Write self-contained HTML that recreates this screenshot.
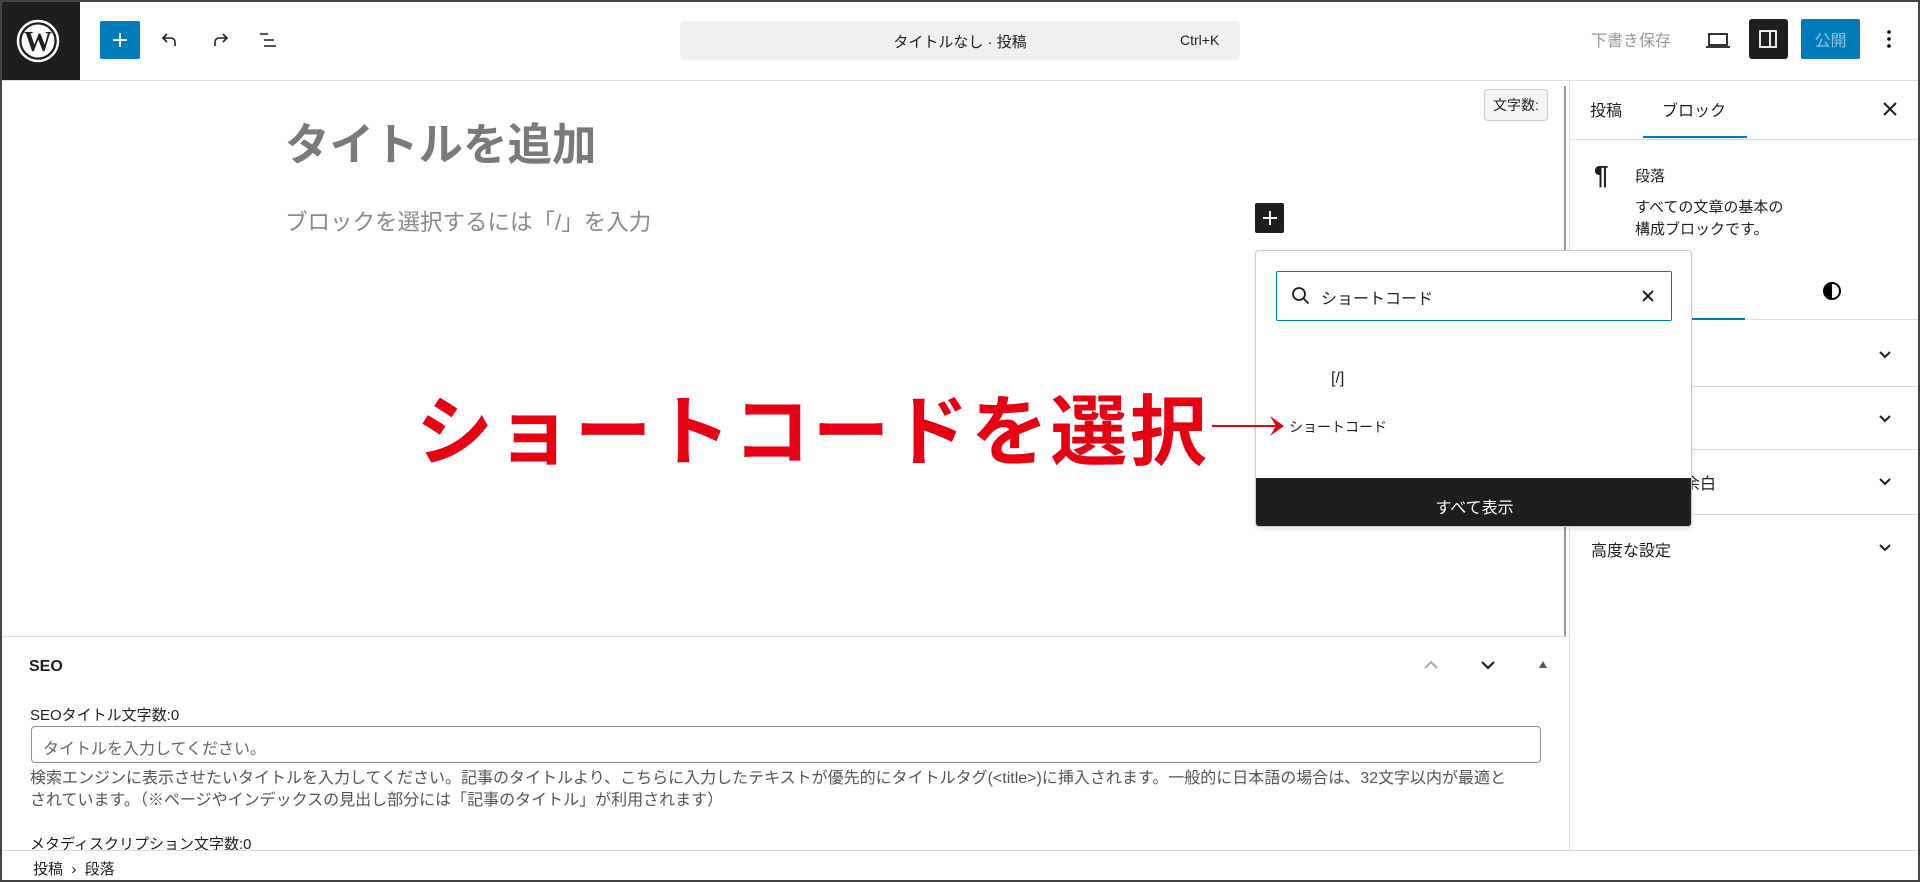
<!DOCTYPE html>
<html><head><meta charset="utf-8"><style>
*{box-sizing:border-box;margin:0;padding:0}
body{width:1920px;height:882px;overflow:hidden;background:#fff;font-family:"Liberation Sans","Noto Sans CJK JP",sans-serif;color:#1e1e1e;position:relative}
.frame{position:absolute;inset:0;border:2px solid #444;pointer-events:none;z-index:50}
.abs{position:absolute}
.t{position:absolute;white-space:nowrap}
</style></head><body>
<div class="frame"></div>
<!-- top bar -->
<div class="abs" style="left:0;top:0;width:1920px;height:81px;border-bottom:1px solid #ddd;background:#fff"></div>
<div class="abs" style="left:0;top:0;width:80px;height:80px;background:#1e1e1e"></div>
<svg class="abs" style="left:16px;top:19px" width="44" height="44" viewBox="0 0 44 44"><circle cx="22" cy="22" r="20" fill="none" stroke="#fff" stroke-width="2.5"/><circle cx="22" cy="22" r="16.5" fill="#fff"/><text x="22" y="32" text-anchor="middle" font-family="Liberation Serif" font-weight="bold" font-size="28" fill="#1e1e1e">W</text></svg>
<div class="abs" style="left:100px;top:21px;width:40px;height:38px;background:#007cba;border-radius:2px"></div>
<svg class="abs" style="left:108px;top:28px" width="24" height="24"><path d="M12 5v14M5 12h14" stroke="#fff" stroke-width="2"/></svg>
<svg class="abs" style="left:158px;top:28px" width="24" height="24" fill="none" stroke="#1e1e1e" stroke-width="1.6"><path d="M9 6L5 10l4 4"/><path d="M5 10h8a4 4 0 014 4v4"/></svg>
<svg class="abs" style="left:208px;top:28px" width="24" height="24" fill="none" stroke="#1e1e1e" stroke-width="1.6"><path d="M15 6l4 4-4 4"/><path d="M19 10h-8a4 4 0 00-4 4v4"/></svg>
<svg class="abs" style="left:257px;top:28px" width="24" height="24" fill="none" stroke="#1e1e1e" stroke-width="1.6"><path d="M3 6h8M7 12h10M7 18h12"/></svg>
<div class="abs" style="left:680px;top:21px;width:560px;height:39px;background:#f0f0f0;border-radius:4px"></div>
<div class="t" style="left:680px;width:560px;text-align:center;top:31px;font-size:15px">タイトルなし · 投稿</div>
<div class="t" style="left:1180px;top:32px;font-size:14px">Ctrl+K</div>
<div class="t" style="left:1591px;top:27px;font-size:16px;color:#999">下書き保存</div>
<svg class="abs" style="left:1705px;top:28px" width="26" height="24" fill="none" stroke="#1e1e1e" stroke-width="1.8"><rect x="4" y="6" width="18" height="11"/><path d="M1 19h24"/></svg>
<div class="abs" style="left:1749px;top:19px;width:39px;height:40px;background:#1e1e1e;border-radius:3px"></div>
<svg class="abs" style="left:1756px;top:27px" width="24" height="24" fill="none" stroke="#fff" stroke-width="1.8"><rect x="4" y="4" width="16" height="16"/><path d="M14 4v16"/></svg>
<div class="abs" style="left:1801px;top:19px;width:59px;height:40px;background:#007cba;border-radius:2px"></div>
<div class="t" style="left:1801px;width:59px;text-align:center;top:27px;font-size:16px;color:#8fc4e3">公開</div>
<svg class="abs" style="left:1879px;top:27px" width="20" height="24"><circle cx="10" cy="5" r="1.8"/><circle cx="10" cy="12" r="1.8"/><circle cx="10" cy="19" r="1.8"/></svg>

<!-- editor -->
<div class="t" style="left:285px;top:108px;font-size:44.5px;font-weight:bold;color:#7a7a7a">タイトルを追加</div>
<div class="t" style="left:285px;top:205px;font-size:22.5px;color:#8a8a8a">ブロックを選択するには「/」を入力</div>
<div class="abs" style="left:1484px;top:89px;width:64px;height:32px;background:#f5f5f5;border:1px solid #ccc;border-radius:4px"></div>
<div class="t" style="left:1493px;top:95px;font-size:14px">文字数:</div>
<div class="abs" style="left:1564px;top:86px;width:2px;height:551px;background:#999"></div>
<div class="abs" style="left:1569px;top:81px;width:1px;height:770px;background:#ddd"></div>
<div class="abs" style="left:1255px;top:203px;width:29px;height:30px;background:#1e1e1e;border-radius:2px"></div>
<svg class="abs" style="left:1258px;top:206px" width="24" height="24"><path d="M12 5v14M5 12h14" stroke="#fff" stroke-width="2"/></svg>

<!-- sidebar -->
<div class="t" style="left:1590px;top:97px;font-size:16px">投稿</div>
<div class="t" style="left:1662px;top:97px;font-size:16px">ブロック</div>
<div class="abs" style="left:1643px;top:136px;width:104px;height:2px;background:#007cba"></div>
<div class="abs" style="left:1570px;top:139px;width:350px;height:1px;background:#ddd"></div>
<svg class="abs" style="left:1880px;top:99px" width="20" height="20" stroke="#1e1e1e" stroke-width="2"><path d="M4 4l12 12M16 4L4 16"/></svg>
<div class="t" style="left:1594px;top:160px;font-size:26px;font-weight:bold">¶</div>
<div class="t" style="left:1635px;top:165px;font-size:15px">段落</div>
<div class="t" style="left:1635px;top:197px;font-size:15px;line-height:22px">すべての文章の基本の<br>構成ブロックです。</div>
<svg class="abs" style="left:1821px;top:280px" width="22" height="22"><circle cx="11" cy="11" r="8" fill="none" stroke="#000" stroke-width="2"/><path d="M11 3a8 8 0 000 16z"/></svg>
<div class="abs" style="left:1570px;top:319px;width:350px;height:1px;background:#ddd"></div>
<div class="abs" style="left:1570px;top:318px;width:175px;height:2px;background:#007cba"></div>
<div class="abs" style="left:1570px;top:386px;width:350px;height:1px;background:#ddd"></div>
<div class="abs" style="left:1570px;top:449px;width:350px;height:1px;background:#ddd"></div>
<div class="abs" style="left:1570px;top:514px;width:350px;height:1px;background:#ddd"></div>
<div class="t" style="left:1684px;top:470px;font-size:16px">余白</div>
<div class="t" style="left:1591px;top:537px;font-size:16px">高度な設定</div>
<svg class="abs" style="left:1875px;top:344px" width="20" height="20" fill="none" stroke="#1e1e1e" stroke-width="2"><path d="M5 8l5 5 5-5"/></svg>
<svg class="abs" style="left:1875px;top:408px" width="20" height="20" fill="none" stroke="#1e1e1e" stroke-width="2"><path d="M5 8l5 5 5-5"/></svg>
<svg class="abs" style="left:1875px;top:471px" width="20" height="20" fill="none" stroke="#1e1e1e" stroke-width="2"><path d="M5 8l5 5 5-5"/></svg>
<svg class="abs" style="left:1875px;top:537px" width="20" height="20" fill="none" stroke="#1e1e1e" stroke-width="2"><path d="M5 8l5 5 5-5"/></svg>

<!-- popover -->
<div class="abs" style="left:1255px;top:250px;width:437px;height:277px;background:#fff;border:1px solid #ccc;border-radius:4px;box-shadow:0 2px 6px rgba(0,0,0,.1);overflow:hidden">
  <div class="abs" style="left:20px;top:20px;width:396px;height:50px;border:1.5px solid #007cba;border-radius:2px"></div>
  <svg class="abs" style="left:33px;top:33px" width="24" height="24" fill="none" stroke="#1e1e1e" stroke-width="1.8"><circle cx="10" cy="10" r="6"/><path d="M14.5 14.5l5 5"/></svg>
  <div class="t" style="left:65px;top:34px;font-size:16px">ショートコード</div>
  <svg class="abs" style="left:382px;top:35px" width="20" height="20" stroke="#1e1e1e" stroke-width="2"><path d="M5 5l10 10M15 5L5 15"/></svg>
  <div class="t" style="left:75px;top:119px;font-size:16px">[/]</div>
  <div class="t" style="left:33px;top:166px;font-size:14px">ショートコード</div>
  <div class="abs" style="left:0;top:227px;width:437px;height:50px;background:#1e1e1e"></div>
  <div class="t" style="left:0;width:437px;text-align:center;top:243px;font-size:16px;color:#fff">すべて表示</div>
</div>
<div class="t" style="left:416px;top:371px;font-size:77px;font-weight:bold;color:#e60012;letter-spacing:2.3px">ショートコードを選択</div>
<div class="abs" style="left:1212px;top:425px;width:66px;height:2px;background:#e60012"></div>
<svg class="abs" style="left:1268px;top:414px" width="20" height="24"><path d="M2 2l14 10L2 22l6-10z" fill="#e60012"/></svg>

<!-- SEO -->
<div class="abs" style="left:0;top:636px;width:1569px;height:1px;background:#ddd"></div>
<div class="t" style="left:29px;top:658px;font-size:16px;font-weight:bold">SEO</div>
<svg class="abs" style="left:1421px;top:655px" width="20" height="20" fill="none" stroke="#aaa" stroke-width="2"><path d="M4 13l6-6 6 6"/></svg>
<svg class="abs" style="left:1478px;top:655px" width="20" height="20" fill="none" stroke="#1e1e1e" stroke-width="2.2"><path d="M4 7l6 6 6-6"/></svg>
<svg class="abs" style="left:1537px;top:658px" width="12" height="12"><path d="M2 10l4-7 4 7z" fill="#555"/></svg>
<div class="t" style="left:30px;top:704px;font-size:15px">SEOタイトル文字数:0</div>
<div class="abs" style="left:31px;top:726px;width:1510px;height:37px;border:1px solid #8c8f94;border-radius:4px"></div>
<div class="t" style="left:43px;top:735px;font-size:16px;color:#666">タイトルを入力してください。</div>
<div class="t" style="left:30px;top:768px;font-size:16px;line-height:22px;color:#555;white-space:normal;width:1500px">検索エンジンに表示させたいタイトルを入力してください。記事のタイトルより、こちらに入力したテキストが優先的にタイトルタグ(&lt;title&gt;)に挿入されます。一般的に日本語の場合は、32文字以内が最適と<br>されています。（※ページやインデックスの見出し部分には「記事のタイトル」が利用されます）</div>
<div class="t" style="left:30px;top:833px;font-size:15px">メタディスクリプション文字数:0</div>
<!-- footer -->
<div class="abs" style="left:0;top:850px;width:1920px;height:32px;background:#fff;border-top:1px solid #ddd"></div>
<div class="t" style="left:33px;top:858px;font-size:15px">投稿 &nbsp;›&nbsp; 段落</div>
</body></html>
